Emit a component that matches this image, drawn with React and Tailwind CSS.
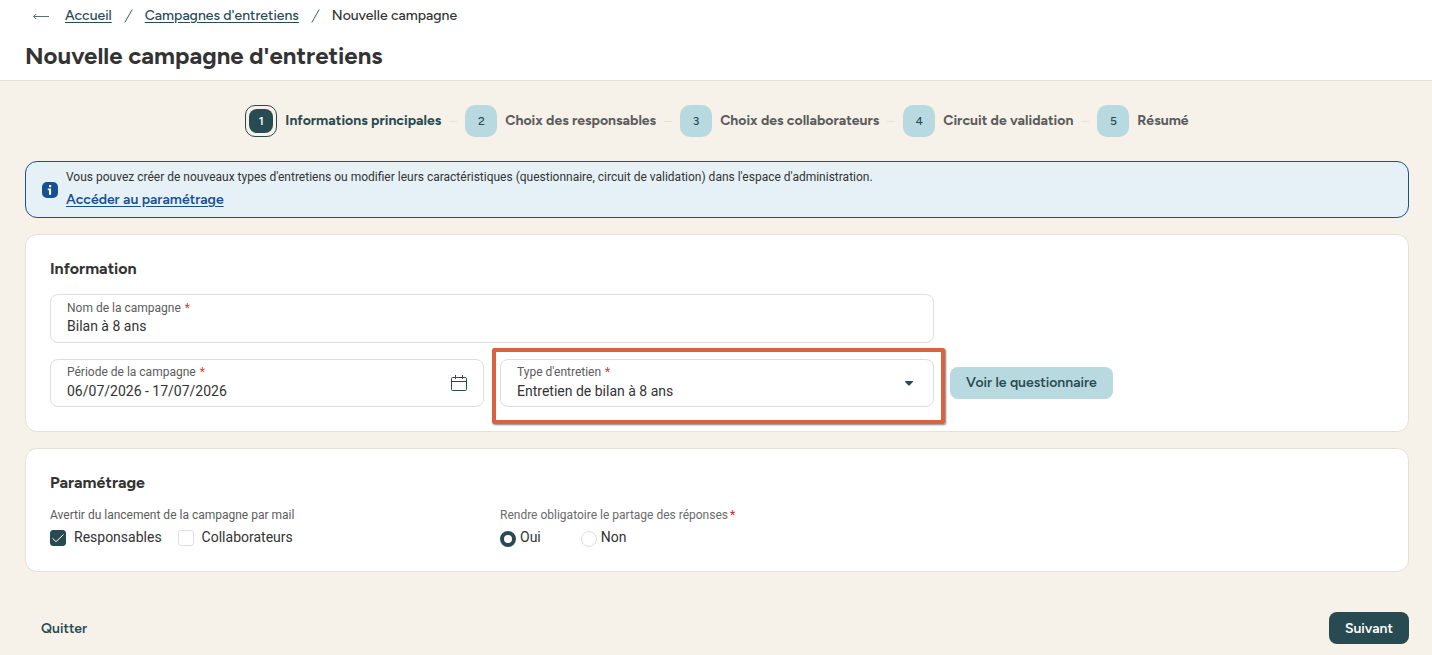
import { Fragment } from "react";

const steps = [
  "Informations principales",
  "Choix des responsables",
  "Choix des collaborateurs",
  "Circuit de validation",
  "Résumé",
];

function Header() {
  return (
    <header className="border-b border-[#e5e1d8] bg-white pr-[23px] pl-[25px] font-['Figtree','Inter',sans-serif]">
      <nav aria-label="Fil d'Ariane" className="flex h-8 items-center text-sm font-medium text-[#284b52]">
        <button type="button" aria-label="Retour" className="ml-2 flex w-8 items-center">
          <svg width="16" height="16" viewBox="0 0 16 16" fill="none" stroke="#284b52" strokeWidth="0.8">
            <path d="M16 8.5H0.7M3.2 6L0.7 8.5L3.2 11" />
          </svg>
        </button>
        <a href="#accueil" className="underline underline-offset-2">Accueil</a>
        <Slash />
        <a href="#campagnes" className="underline underline-offset-2">Campagnes d'entretiens</a>
        <Slash />
        <span className="text-[#333333]">Nouvelle campagne</span>
      </nav>
      <h1 className="flex h-12 items-center text-2xl font-bold text-[#333333]">Nouvelle campagne d'entretiens</h1>
    </header>
  );
}

function Slash() {
  return (
    <svg aria-hidden="true" className="mx-3 shrink-0" width="9" height="14" viewBox="0 0 9 14" fill="none" stroke="#284b52" strokeWidth="0.9">
      <path d="M8.2 0.5L0.8 13.5" />
    </svg>
  );
}

function Stepper() {
  return (
    <ol className="flex items-center justify-center gap-2 font-['Figtree','Inter',sans-serif]">
      {steps.map((label, i) => (
        <Fragment key={label}>
          {i > 0 && <li aria-hidden="true" className="h-px w-2 bg-[#e5e1d8]" />}
          <li className="flex items-center gap-2" aria-current={i === 0 ? "step" : undefined}>
            {i === 0 ? (
              <span className="flex size-8 items-center justify-center rounded-[10px] border border-[#284b52] p-[3px]">
                <span className="flex size-6 items-center justify-center rounded-lg bg-[#284b52] text-xs font-semibold text-white">1</span>
              </span>
            ) : (
              <span className="flex size-8 items-center justify-center rounded-[10px] bg-[#b8d9e0] text-xs font-medium text-[#284b52]">{i + 1}</span>
            )}
            <span className={i === 0 ? "text-sm font-bold text-[#284b52]" : "text-sm font-bold text-[#5c5c5c]"}>{label}</span>
          </li>
        </Fragment>
      ))}
    </ol>
  );
}

function Notice() {
  return (
    <div role="note" className="mt-6 flex h-[57px] items-center gap-2 rounded-xl border border-[#165190] bg-[#e6f1f7] px-4">
      <svg className="shrink-0" width="16" height="16" viewBox="0 0 16 16">
        <rect width="16" height="16" rx="5" fill="#165190" />
        <rect x="7" y="3" width="2.2" height="2.2" rx="0.5" fill="#fff" />
        <path d="M5.8 6.4H9.1V12.8H7V8.2H5.8Z" fill="#fff" />
      </svg>
      <div className="flex flex-col items-start gap-[5px]">
        <p className="text-xs leading-4 text-[#333333]">
          Vous pouvez créer de nouveaux types d'entretiens ou modifier leurs caractéristiques (questionnaire, circuit de validation) dans l'espace d'administration.
        </p>
        <a href="#parametrage" className="font-['Figtree','Inter',sans-serif] text-sm leading-5 font-semibold text-[#165190] underline underline-offset-2">
          Accéder au paramétrage
        </a>
      </div>
    </div>
  );
}

function FieldLabel({ htmlFor, children }) {
  return (
    <label htmlFor={htmlFor} className="flex gap-1 text-xs leading-4 text-[#5c5c5c]">
      {children} <span className="text-[#c9453a]">*</span>
    </label>
  );
}

function Information() {
  return (
    <section className="mt-4 rounded-xl border border-[#e5e1d8] bg-white p-6">
      <h2 className="mb-[15px] font-['Figtree','Inter',sans-serif] text-base leading-5 font-bold text-[#333333]">Information</h2>
      <div className="grid grid-cols-6 gap-4">
        <div className="col-span-4 h-[49px] rounded-lg border border-[#dedede] px-4 pt-[5px]">
          <FieldLabel htmlFor="nom">Nom de la campagne</FieldLabel>
          <input id="nom" defaultValue="Bilan à 8 ans" className="block w-full text-sm leading-5 text-[#333333] outline-none" />
        </div>
        <div className="relative col-span-2 col-start-1 h-12 rounded-lg border border-[#dedede] px-4 pt-1">
          <FieldLabel htmlFor="periode">Période de la campagne</FieldLabel>
          <input id="periode" defaultValue="06/07/2026 - 17/07/2026" className="mt-px block w-full pr-8 text-sm leading-5 text-[#333333] outline-none" />
          <button type="button" aria-label="Ouvrir le calendrier" className="absolute inset-y-0 right-4 flex items-center">
            <svg width="16" height="16" viewBox="0 0 16 16" fill="none" stroke="#284b52">
              <rect x="0.5" y="2.5" width="15" height="13" rx="1.2" />
              <path d="M0.5 6.5H15.5M4.5 0V4M11.5 0V4" />
            </svg>
          </button>
        </div>
        <div className="relative col-span-2 h-12 rounded-lg border border-[#dedede] px-4 pt-1">
          <FieldLabel htmlFor="type">Type d'entretien</FieldLabel>
          <select id="type" className="mt-px block w-full appearance-none text-sm leading-5 text-[#333333] outline-none">
            <option>Entretien de bilan à 8 ans</option>
          </select>
          <svg className="pointer-events-none absolute top-5 right-5" width="8" height="6" viewBox="0 0 8 6">
            <path d="M0.6 1H7.4Q8.3 1.2 7.8 2L4.7 5.3Q4 6 3.3 5.3L0.2 2Q-0.3 1.2 0.6 1Z" fill="#284b52" />
          </svg>
          <div className="pointer-events-none absolute -top-3 -right-3 -bottom-[18px] -left-[9px] rounded-xs border-4 border-[#d96245] shadow-[1px_1px_2px_rgba(0,0,0,0.5)]" />
        </div>
        <div className="col-span-2 flex items-center">
          <button type="button" className="h-8 rounded-lg bg-[#b8d9e0] px-4 font-['Figtree','Inter',sans-serif] text-sm font-semibold whitespace-nowrap text-[#284b52]">
            Voir le questionnaire
          </button>
        </div>
      </div>
    </section>
  );
}

function Check({ label, defaultChecked }) {
  return (
    <label className="flex items-end gap-2 leading-[18px]">
      <span className="grid size-4">
        <input
          type="checkbox"
          defaultChecked={defaultChecked}
          className="peer col-start-1 row-start-1 size-4 appearance-none rounded-[3px] border border-[#dedede] bg-white checked:border-[#284b52] checked:bg-[#284b52]"
        />
        <svg className="pointer-events-none invisible col-start-1 row-start-1 peer-checked:visible" width="16" height="16" viewBox="0 0 16 16" fill="none" stroke="#fff" strokeWidth="1">
          <path d="M2.5 8.3L6 11.7L13.5 4.5" />
        </svg>
      </span>
      {label}
    </label>
  );
}

function Radio({ label, defaultChecked }) {
  return (
    <label className="flex items-start gap-1 leading-[18px]">
      <input
        type="radio"
        name="partage"
        defaultChecked={defaultChecked}
        className="mt-[3px] size-4 appearance-none rounded-full border border-[#dedede] bg-white checked:border-4 checked:border-[#284b52]"
      />
      {label}
    </label>
  );
}

function Settings() {
  return (
    <section className="mt-4 rounded-xl border border-[#e5e1d8] bg-white p-6">
      <h2 className="mb-3 font-['Figtree','Inter',sans-serif] text-base leading-5 font-bold text-[#333333]">Paramétrage</h2>
      <div className="grid grid-cols-6 gap-4">
        <fieldset className="col-span-2">
          <legend className="text-xs leading-5 text-[#5c5c5c]">Avertir du lancement de la campagne par mail</legend>
          <div className="mt-[3px] flex h-[19px] items-start gap-4 text-sm text-[#333333]">
            <Check label="Responsables" defaultChecked />
            <Check label="Collaborateurs" />
          </div>
        </fieldset>
        <fieldset className="col-span-2">
          <legend className="text-xs leading-5 text-[#6b6b6b]">
            Rendre obligatoire le partage des réponses<span className="ml-0.5 text-[#d4202a]">*</span>
          </legend>
          <div className="mt-[3px] flex h-[19px] items-start gap-10 text-sm text-[#333333]">
            <Radio label="Oui" defaultChecked />
            <Radio label="Non" />
          </div>
        </fieldset>
      </div>
    </section>
  );
}

export default function App() {
  return (
    <div className="min-h-screen bg-[#f6f1e9] font-['Roboto',sans-serif]">
      <Header />
      <main className="pt-6 pr-[23px] pb-[11px] pl-[25px]">
        <Stepper />
        <Notice />
        <Information />
        <Settings />
        <div className="mt-10 flex justify-between font-['Figtree','Inter',sans-serif] text-sm font-semibold">
          <button type="button" className="h-8 px-4 pt-px text-[#284b52]">Quitter</button>
          <button type="button" className="h-8 rounded-lg bg-[#284b52] px-4 pt-px text-white">Suivant</button>
        </div>
      </main>
    </div>
  );
}
